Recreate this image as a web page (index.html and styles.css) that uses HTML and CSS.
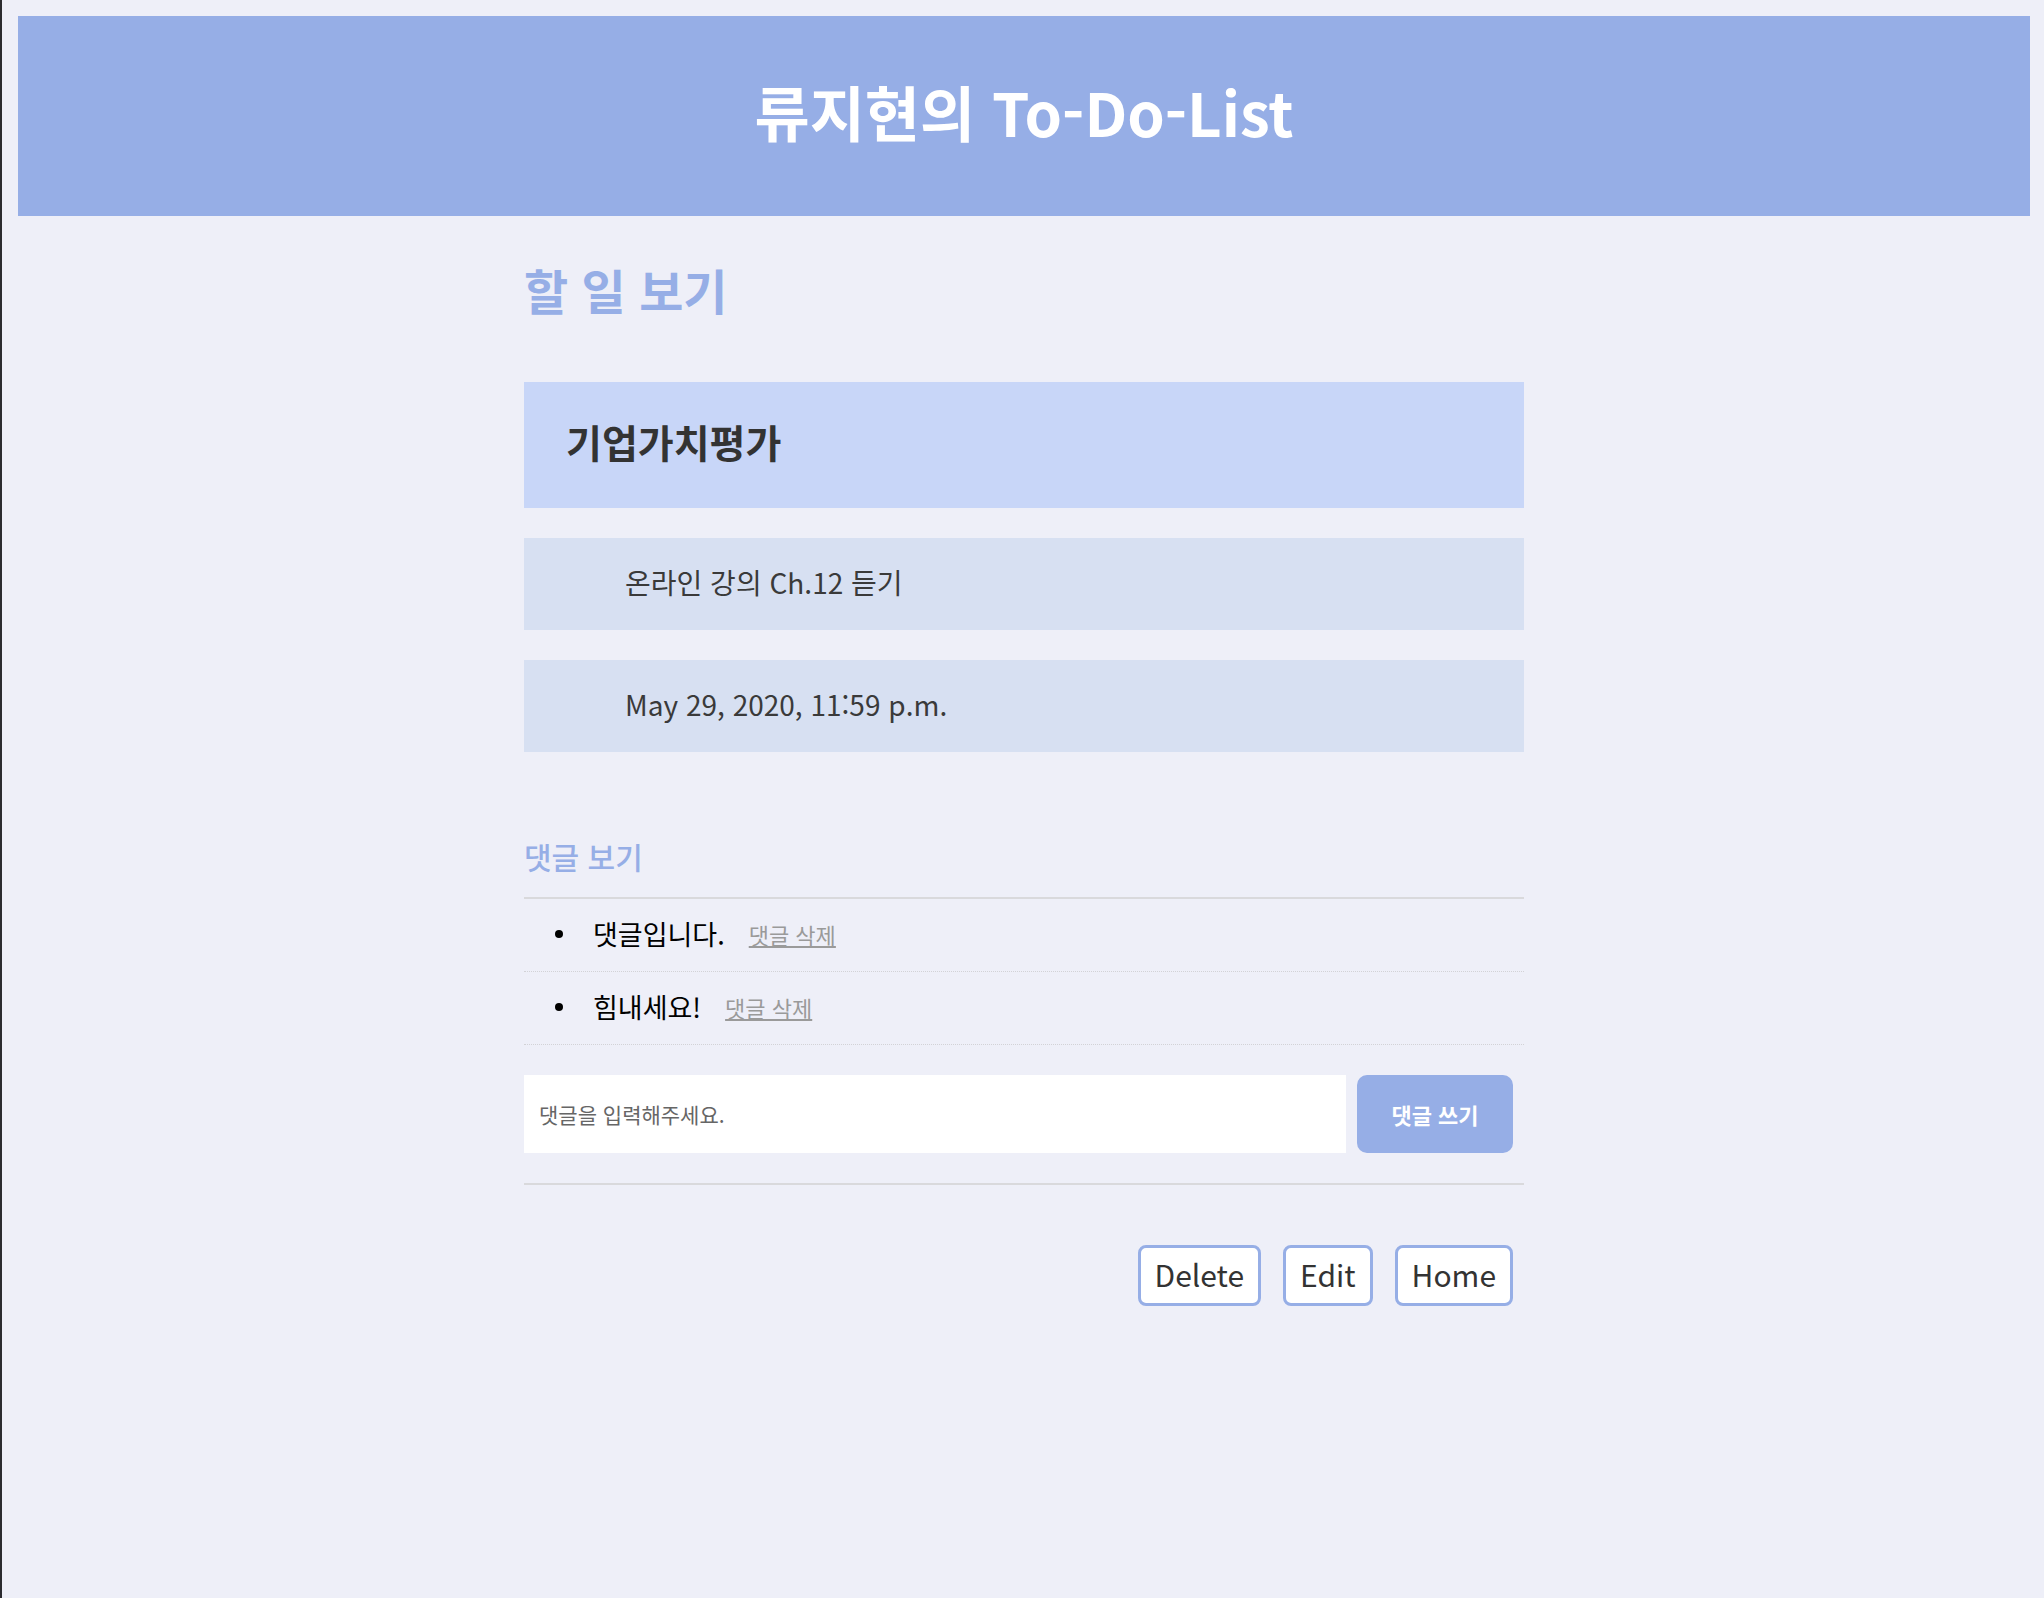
FILE: index.html
```html
<!DOCTYPE html>
<html lang="ko">
<head>
<meta charset="utf-8">
<title>류지현의 To-Do-List</title>
<link rel="stylesheet" href="styles.css">
</head>
<body>
<header class="site-header">
  <h1 class="site-title">류지현의 To-Do-List</h1>
</header>
<main class="container">
  <h2 class="page-title">할 일 보기</h2>
  <div class="todo-title">기업가치평가</div>
  <div class="todo-field">온라인 강의 Ch.12 듣기</div>
  <div class="todo-field">May 29, 2020, 11:59 p.m.</div>

  <section class="comments">
    <h3 class="comments-title">댓글 보기</h3>
    <ul class="comment-list">
      <li class="comment"><span class="comment-text">댓글입니다.</span><a class="comment-delete" href="#">댓글 삭제</a></li>
      <li class="comment"><span class="comment-text">힘내세요!</span><a class="comment-delete" href="#">댓글 삭제</a></li>
    </ul>
    <form class="comment-form">
      <input class="comment-input" type="text" placeholder="댓글을 입력해주세요.">
      <button class="comment-submit" type="button">댓글 쓰기</button>
    </form>
  </section>

  <div class="actions">
    <a class="action-btn" href="#">Delete</a>
    <a class="action-btn" href="#">Edit</a>
    <a class="action-btn" href="#">Home</a>
  </div>
</main>
</body>
</html>
```

FILE: styles.css
```css
html {
  background: #eeeff8;
}

body {
  margin: 0;
  min-height: 100vh;
  box-sizing: border-box;
  border-left: 2px solid #2b2b2f;
  padding: 16px 14px 16px 16px;
  font-family: "Noto Sans CJK KR", "Noto Sans", sans-serif;
  color: #333;
}

.site-header {
  height: 200px;
  box-sizing: border-box;
  padding-bottom: 10px;
  background: #96aee6;
  display: flex;
  align-items: center;
  justify-content: center;
}

.site-title {
  margin: 0;
  color: #fff;
  font-size: 60px;
  font-weight: 700;
  line-height: 1;
}

.container {
  width: 1000px;
  margin: 0 auto;
}

.page-title {
  margin: 43px 0 63px;
  height: 60px;
  line-height: 60px;
  font-size: 48px;
  font-weight: 700;
  color: #96aee6;
}

.todo-title {
  height: 126px;
  box-sizing: border-box;
  display: flex;
  align-items: center;
  padding: 0 0 8px 42px;
  background: #c8d6f8;
  font-size: 39px;
  font-weight: 700;
  color: #333;
  margin-bottom: 30px;
}

.todo-field {
  height: 92px;
  box-sizing: border-box;
  display: flex;
  align-items: center;
  padding: 0 0 5px 101px;
  background: #d7e0f2;
  font-size: 28px;
  color: #3a3a3a;
  margin-bottom: 30px;
}

.comments {
  margin-top: 84px;
}

.comments-title {
  margin: 0 0 21px;
  height: 40px;
  line-height: 40px;
  font-size: 30px;
  font-weight: 500;
  color: #96aee6;
}

.comment-list {
  margin: 0;
  padding: 0;
  list-style: none;
  border-top: 2px solid #d9d9dc;
}

.comment {
  display: flex;
  align-items: center;
  padding: 0 0 3px 31px;
  box-sizing: border-box;
  height: 73px;
  border-bottom: 1px dotted #d2d2d6;
  font-size: 27px;
  color: #000;
}

.comment::before {
  content: "";
  width: 8px;
  height: 8px;
  border-radius: 50%;
  background: #000;
  margin-right: 30px;
}

.comment-delete {
  margin-left: 24px;
  font-size: 22px;
  color: #9a9a9a;
  text-decoration: underline;
}

.comment-form {
  display: flex;
  gap: 11px;
  margin: 30px 0;
  padding-right: 11px;
}

.comment-input {
  flex: 1;
  height: 78px;
  box-sizing: border-box;
  border: none;
  background: #fff;
  padding: 0 15px;
  font-family: inherit;
  font-size: 21px;
  color: #333;
  outline: none;
}

.comment-input::placeholder {
  color: #666;
}

.comment-submit {
  width: 156px;
  height: 78px;
  border: none;
  border-radius: 10px;
  background: #96aee6;
  color: #fff;
  font-family: inherit;
  font-size: 22px;
  font-weight: 700;
}

.actions {
  border-top: 2px solid #d9d9dc;
  padding: 60px 11px 0 0;
  display: flex;
  justify-content: flex-end;
  gap: 22px;
}

.action-btn {
  height: 61px;
  box-sizing: border-box;
  display: flex;
  align-items: center;
  padding: 0 14px 3px;
  border: 3px solid #96aee6;
  border-radius: 8px;
  background: #fff;
  color: #333;
  font-size: 30px;
  font-weight: 400;
  text-decoration: none;
}
```
